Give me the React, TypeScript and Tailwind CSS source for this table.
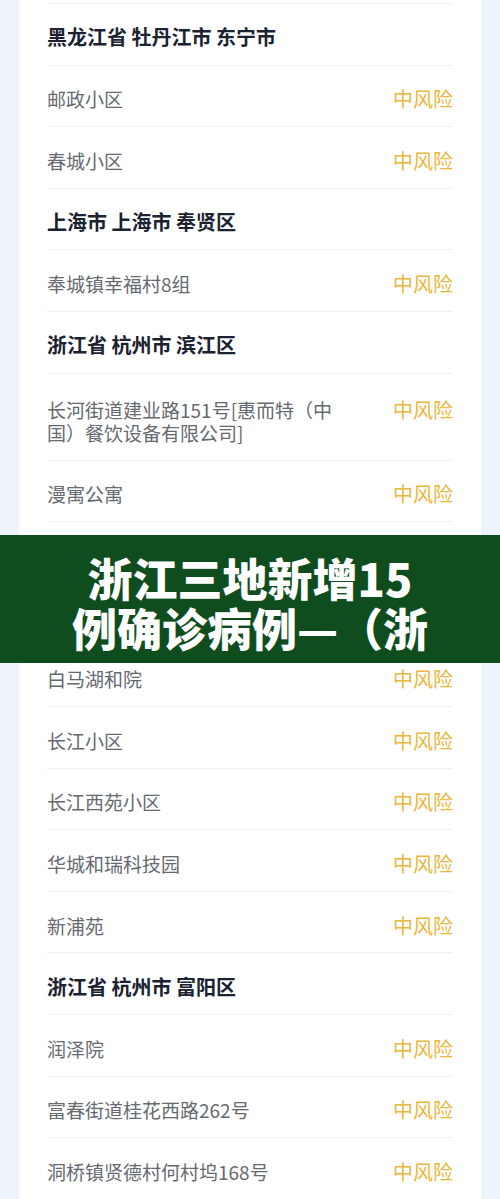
type Row =
  | { kind: "head"; text: string }
  | { kind: "item"; text: string; tall?: boolean }
  | { kind: "blank" };

const ROWS: Row[] = [
  { kind: "head", text: "黑龙江省 牡丹江市 东宁市" },
  { kind: "item", text: "邮政小区" },
  { kind: "item", text: "春城小区" },
  { kind: "head", text: "上海市 上海市 奉贤区" },
  { kind: "item", text: "奉城镇幸福村8组" },
  { kind: "head", text: "浙江省 杭州市 滨江区" },
  { kind: "item", text: "长河街道建业路151号[惠而特（中国）餐饮设备有限公司]", tall: true },
  { kind: "item", text: "漫寓公寓" },
  // these two rows sit under the title banner
  { kind: "blank" },
  { kind: "blank" },
  { kind: "item", text: "白马湖和院" },
  { kind: "item", text: "长江小区" },
  { kind: "item", text: "长江西苑小区" },
  { kind: "item", text: "华城和瑞科技园" },
  { kind: "item", text: "新浦苑" },
  { kind: "head", text: "浙江省 杭州市 富阳区" },
  { kind: "item", text: "润泽院" },
  { kind: "item", text: "富春街道桂花西路262号" },
  { kind: "item", text: "洞桥镇贤德村何村坞168号" },
];

export default function App() {
  return (
    <div
      className="relative min-h-[1199px] w-[500px] overflow-hidden bg-[#eef4fb]"
      style={{ fontFamily: '"Noto Sans CJK SC", "Noto Sans", sans-serif' }}
    >
      <div className="mx-[19px] bg-white px-[28px]">
        <div className="h-[4px] border-b border-[#eeeff1]" />
        {ROWS.map((r, i) => {
          if (r.kind === "blank") {
            return <div key={i} className="h-[61.6px] border-b border-[#eeeff1]" />;
          }
          if (r.kind === "head") {
            return (
              <div
                key={i}
                className="flex h-[61.6px] items-center border-b border-[#eeeff1] pt-[6px] text-[20px] font-bold text-[#1b2230]"
              >
                {r.text}
              </div>
            );
          }
          if (r.tall) {
            return (
              <div
                key={i}
                className="flex h-[87px] items-start justify-between border-b border-[#eeeff1] pt-[24px]"
              >
                <span className="max-w-[312px] text-[19px] leading-[23px] text-[#666a70]">{r.text}</span>
                <span className="shrink-0 text-[20px] leading-[23px] text-[#e9b73c]">中风险</span>
              </div>
            );
          }
          return (
            <div
              key={i}
              className="flex h-[61.6px] items-center justify-between border-b border-[#eeeff1] pt-[6px]"
            >
              <span className="text-[19px] leading-[23px] text-[#666a70]">{r.text}</span>
              <span className="shrink-0 text-[20px] leading-[23px] text-[#e9b73c]">中风险</span>
            </div>
          );
        })}
      </div>

      <div className="absolute left-0 right-0 top-[535px] h-[128px] bg-[#0f4d1f] pt-[18px] text-center text-[45px] font-black leading-[50px] text-white">
        <p>
          浙江三地新增15
          <br />
          例确诊病例—（浙
        </p>
      </div>
    </div>
  );
}
